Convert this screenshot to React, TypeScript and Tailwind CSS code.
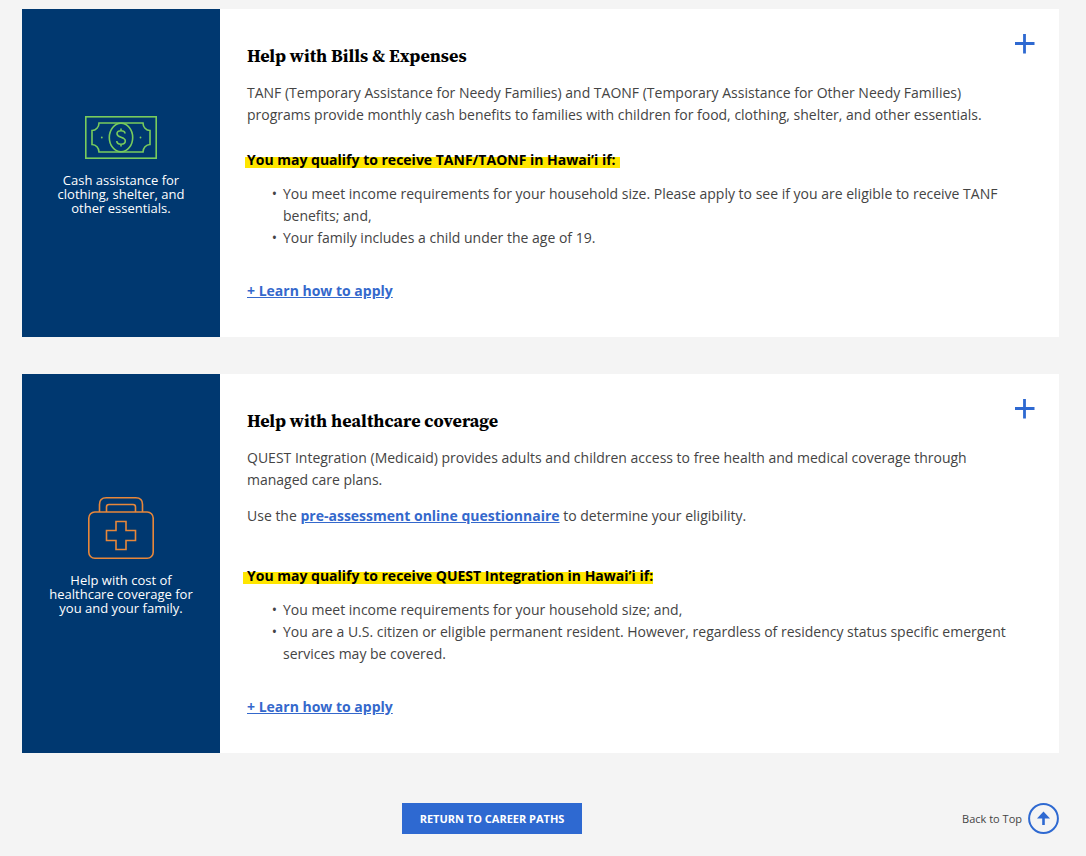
import type { ReactNode } from "react";

function CashIcon() {
  return (
    <svg width="72" height="43" viewBox="0 0 72 43" fill="none" stroke="#78cc5c" strokeWidth="1.6" aria-hidden="true">
      <rect x="0.8" y="0.8" width="70.4" height="41.4" />
      <path d="M14 7H58C58 11 61 14.500 65 14.500V28.500C61 28.500 58 32 58 36H14C14 32 11 28.500 7 28.500V14.500C11 14.500 14 11 14 7Z" />
      <ellipse cx="36" cy="21.500" rx="11.700" ry="14.300" />
      <path d="M40 17.500C40 15.800 38.300 14.700 36 14.700C33.600 14.700 32 15.900 32 17.800C32 22.200 40.300 20.300 40.300 25C40.300 27 38.500 28.200 36 28.200C33.500 28.200 31.800 27 31.800 25M36 12.500V14.700M36 28.200V30.500" />
      <circle cx="16.800" cy="21.500" r="0.900" fill="#78cc5c" stroke="none" />
      <circle cx="55.500" cy="21.500" r="0.900" fill="#78cc5c" stroke="none" />
    </svg>
  );
}

function MedicalKitIcon() {
  return (
    <svg width="66" height="62" viewBox="0 0 66 62" fill="none" stroke="#e8873a" strokeWidth="1.6" aria-hidden="true">
      <rect x="0.8" y="15" width="64.4" height="46.2" rx="6" />
      <path d="M11.500 15V7.500Q11.500 0.800 18.200 0.800H47.800Q54.500 0.800 54.500 7.500V15" />
      <path d="M18.500 15V10Q18.500 7.500 21 7.500H45Q47.500 7.500 47.500 10V15" />
      <path d="M28 24.500H38V33.500H47.500V43.500H38V52.500H28V43.500H18.500V33.500H28Z" />
    </svg>
  );
}

type ProgramCardProps = {
  icon: ReactNode;
  caption: string;
  title: string;
  children: ReactNode;
};

function ProgramCard({ icon, caption, title, children }: ProgramCardProps) {
  return (
    <article className="flex bg-white">
      <div className="flex w-[198px] shrink-0 flex-col items-center justify-center gap-3.5 bg-[#003870] px-6 pb-4 text-center text-white">
        {icon}
        <p className="text-[13px] leading-[14px]">{caption}</p>
      </div>
      <div className="min-w-0 flex-1 pt-[25px] pr-6 pb-[35px] pl-[27px]">
        <div className="mb-3.5 flex items-start justify-between">
          <h2 className="mt-2.5 font-['Source_Serif_Pro','Source_Serif_4','Liberation_Serif',serif] text-[18px] leading-6 font-bold text-black">
            {title}
          </h2>
          <button type="button" aria-label={`Expand ${title}`} className="text-[#2e69d1]">
            <svg width="20" height="20" viewBox="0 0 20 20" fill="none" stroke="currentColor" strokeWidth="2.800" aria-hidden="true">
              <path d="M9.500 0V19.500M0 9.500H19.500" />
            </svg>
          </button>
        </div>
        <div className="pr-3">
          {children}
          <a href="#apply" className="mt-[31px] inline-block font-bold text-[#3468cc] underline">
            + Learn how to apply
          </a>
        </div>
      </div>
    </article>
  );
}

function Requirements({ items }: { items: string[] }) {
  return (
    <ul className="mt-3">
      {items.map((item) => (
        <li key={item} className="flex">
          <span className="w-9 shrink-0 pr-1.5 text-right" aria-hidden="true">•</span>
          <span>{item}</span>
        </li>
      ))}
    </ul>
  );
}

export default function App() {
  return (
    <main className="min-h-screen bg-[#f4f4f4] pt-[9px] pr-[27px] pb-[22px] pl-[22px] font-['Open_Sans',sans-serif] text-[14px] leading-[22px] text-[#444]">
      <div className="flex flex-col gap-[37px]">
        <ProgramCard
          icon={<CashIcon />}
          caption="Cash assistance for clothing, shelter, and other essentials."
          title="Help with Bills & Expenses"
        >
          <p>
            TANF (Temporary Assistance for Needy Families) and TAONF (Temporary Assistance for Other Needy Families)
            programs provide monthly cash benefits to families with children for food, clothing, shelter, and other
            essentials.
          </p>
          <h3 className="mt-[23px] -ml-0.5 w-fit pr-1 pl-0.5 font-bold text-black [background-image:linear-gradient(transparent_8px,#ffe600_8px,#ffe600_19px,transparent_19px)]">
            You may qualify to receive TANF/TAONF in Hawai’i if:
          </h3>
          <Requirements
            items={[
              "You meet income requirements for your household size. Please apply to see if you are eligible to receive TANF benefits; and,",
              "Your family includes a child under the age of 19.",
            ]}
          />
        </ProgramCard>

        <ProgramCard
          icon={<MedicalKitIcon />}
          caption="Help with cost of healthcare coverage for you and your family."
          title="Help with healthcare coverage"
        >
          <p>
            QUEST Integration (Medicaid) provides adults and children access to free health and medical coverage through
            managed care plans.
          </p>
          <p className="mt-3.5">
            Use the{" "}
            <a href="#questionnaire" className="font-bold text-[#3468cc] underline">
              pre-assessment online questionnaire
            </a>{" "}
            to determine your eligibility.
          </p>
          <h3 className="mt-[38px] -ml-1 w-fit pl-1 font-bold text-black [background-image:linear-gradient(transparent_7px,#ffe600_7px,#ffe600_19px,transparent_19px)]">
            You may qualify to receive QUEST Integration in Hawai’i if:
          </h3>
          <Requirements
            items={[
              "You meet income requirements for your household size; and,",
              "You are a U.S. citizen or eligible permanent resident. However, regardless of residency status specific emergent services may be covered.",
            ]}
          />
        </ProgramCard>
      </div>

      <footer className="mt-[50px] flex items-center">
        <div className="flex flex-1 justify-center">
          <a href="#career-paths" className="bg-[#2e69d1] px-[18px] py-1 text-[11px] leading-[23px] font-bold text-white">
            RETURN TO CAREER PATHS
          </a>
        </div>
        <a href="#top" className="flex items-center gap-1.5 text-[11px]">
          Back to Top
          <svg width="31" height="31" viewBox="0 0 31 31" fill="none" stroke="#2e69d1" strokeWidth="2" aria-hidden="true">
            <circle cx="15.500" cy="15.500" r="14.400" />
            <path d="M15.500 14V22" strokeWidth="2.600" />
            <path d="M15.500 8.500L22 15.500H9Z" fill="#2e69d1" stroke="none" />
          </svg>
        </a>
      </footer>
    </main>
  );
}
